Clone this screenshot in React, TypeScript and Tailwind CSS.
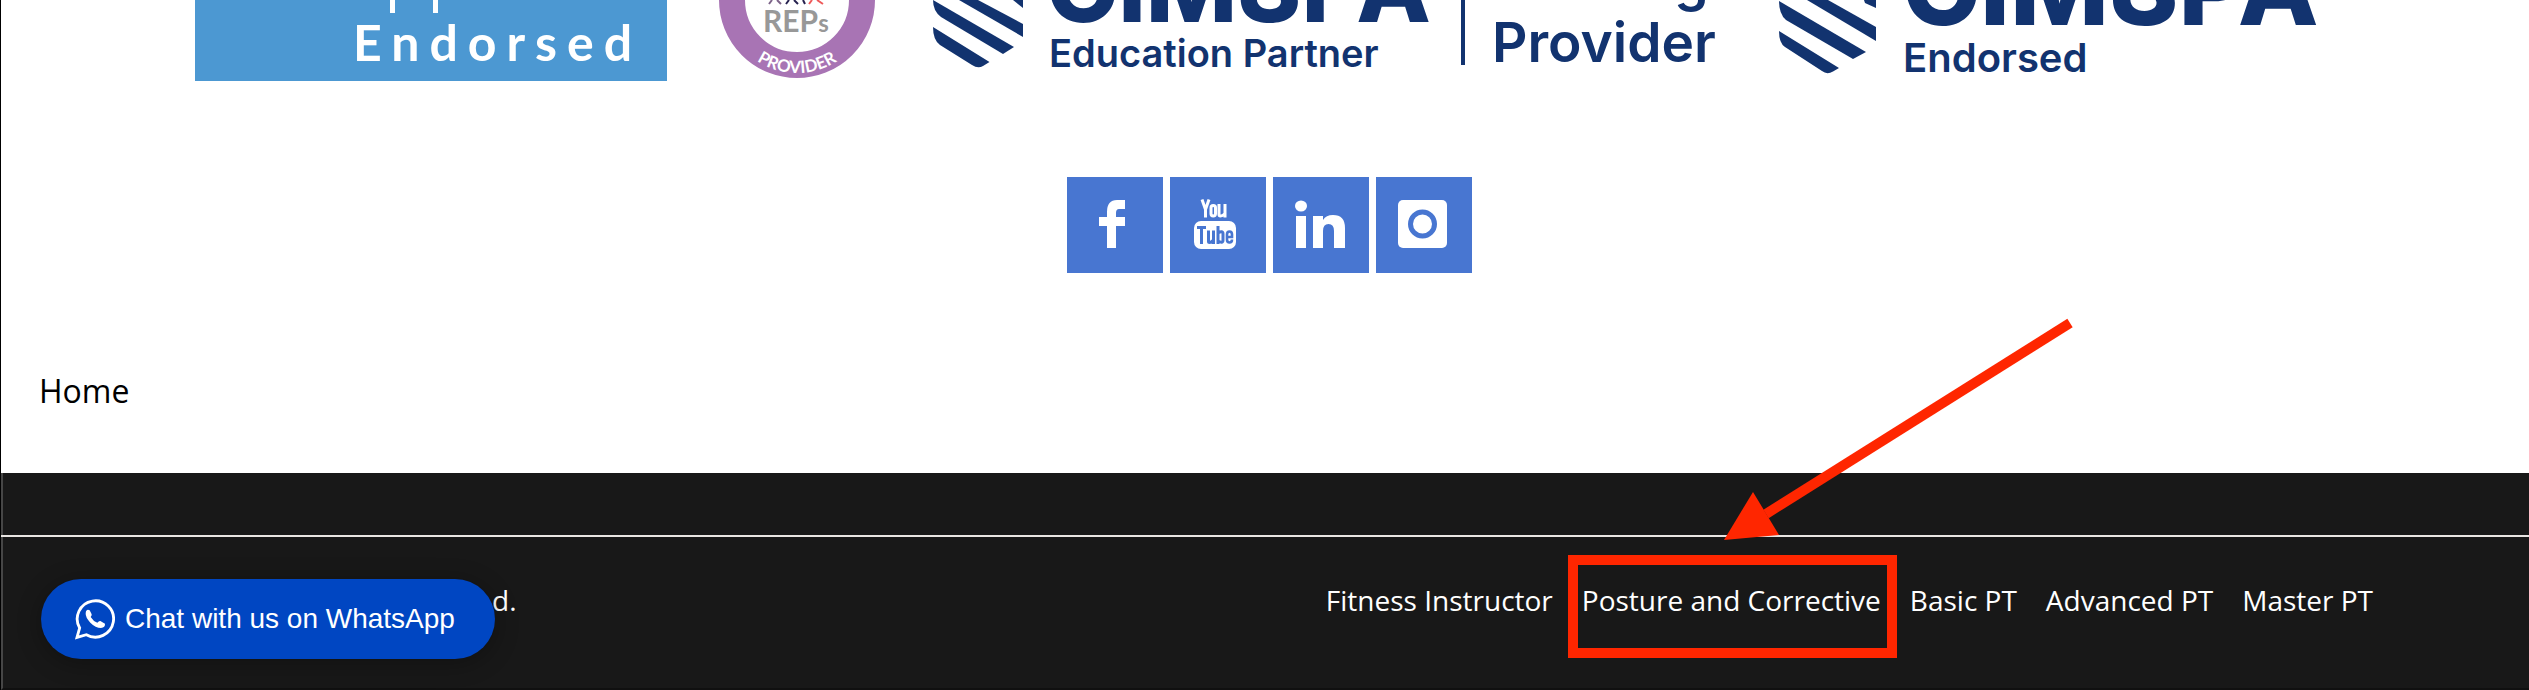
import React from "react";

const NAVY = "#12336f";

const courses = ["Fitness Instructor", "Posture and Corrective", "Basic PT", "Advanced PT", "Master PT"];

const EndorsedLogo: React.FC = () => (
  <svg width="472" height="81" viewBox="0 0 472 81" role="img" aria-label="Endorsed" className="shrink-0 bg-[#4c98d2]">
    <path d="M195 0h5v13h-5zM238 0h5v13h-5z" fill="#fff" />
    <text x="158" y="61" fill="#fff" fontSize="50" className="font-['Lato'] font-bold tracking-[0.2em]">
      Endorsed
    </text>
  </svg>
);

const RepsLogo: React.FC = () => (
  <svg width="157" height="81" viewBox="0 0 157 81" role="img" aria-label="REPs Provider" className="shrink-0">
    <circle cx="78" cy="0" r="65" fill="#fff" stroke="#a874b4" strokeWidth="26" />
    <path d="M53 0l-3 4M58 0l4 4" stroke="#7d6489" strokeWidth="2" />
    <path d="M70 0l-3 4M75 0l4 4M84 0l2 4" stroke="#26224f" strokeWidth="2" />
    <path d="M93 0l-3 4M98 0l6 4" stroke="#ee5a5a" strokeWidth="2" />
    <text x="44" y="32" fill="#989898" fontSize="30" className="font-['Lato'] font-bold">
      REP
      <tspan fontSize="24">s</tspan>
    </text>
    <path id="reps-arc" d="M5 0A73 73 0 0 0 151 0" fill="none" />
    <text fill="#fff" fontSize="17" textAnchor="middle" className="font-['Lato'] font-bold">
      <textPath href="#reps-arc" startOffset="50%">
        PROVIDER
      </textPath>
    </text>
  </svg>
);

const CimspaPartnerLogo: React.FC = () => (
  <svg width="794" height="81" viewBox="0 0 794 81" role="img" aria-label="CIMSPA Education Partner" className="shrink-0">
    <g fill={NAVY} className="font-['Inter']">
      <path d="M5 27L61.500 62L55 66Q50 69 44 65L12 45Q5 40 5 27Z" />
      <path d="M5 0L86 47L75 54L13 17Q5 11 5 0Z" />
      <path d="M31 0H50L95 24V37Z" />
      <path d="M85 0H95V8Z" />
      <text x="118" y="22" fontSize="97" className="font-extrabold">
        CIMSPA
      </text>
      <text x="121" y="67" fontSize="38" className="font-semibold">
        Education Partner
      </text>
      <path d="M533 0h4v65h-4z" />
      <text x="564" y="0" fontSize="55" className="font-semibold">
        Training
      </text>
      <text x="564" y="62" fontSize="55" className="font-semibold">
        Provider
      </text>
    </g>
  </svg>
);

const CimspaEndorsedLogo: React.FC = () => (
  <svg width="550" height="81" viewBox="0 0 550 81" role="img" aria-label="CIMSPA Endorsed" className="shrink-0">
    <g fill={NAVY} className="font-['Inter']">
      <path d="M5 31L65 68L59 71.500Q53 75 48 71L11 47Q5 43 5 31Z" />
      <path d="M5 1L92 52L79 59L12 20Q5 14 5 1Z" />
      <path d="M33 0H54L102 27V41Z" />
      <path d="M90 0H102V8L91 3Z" />
      <text x="128" y="25" fontSize="105" className="font-extrabold">
        CIMSPA
      </text>
      <text x="129" y="72" fontSize="40" className="font-semibold">
        Endorsed
      </text>
    </g>
  </svg>
);

const socials = [
  {
    name: "Facebook",
    icon: <path d="M58 23v9h-6q-3 0-3 4v4h9v9h-9v22h-9V49h-8v-9h8v-5q0-12 10-12z" fill="#fff" />,
  },
  {
    name: "YouTube",
    icon: (
      <>
        <g fill="none" stroke="#fff" strokeWidth="3">
          <path d="M32 22.500l3.500 10v8M39 22.500l-3.500 10" />
          <rect x="41" y="28.500" width="4.500" height="10.500" rx="2.200" />
          <path d="M49 27v10.500q0 1.500 1.500 1.500q2 0 4-2M55 27v13.500" />
        </g>
        <rect x="24" y="44" width="42" height="28" rx="7" fill="#fff" />
        <g fill="none" stroke="#4876d1" strokeWidth="3">
          <path d="M27 50.500h9M31.500 50v17" />
          <path d="M38.500 53.500v11q0 1 1 1q2 0 3.500-2M43.500 53.500V67" />
          <path d="M48 49v18M48 56q5-3 5 1v6q0 4-5 1" />
          <path d="M62 62.500q0 3-2.500 3t-2.500-3v-5q0-3 2.500-3t2.500 3v2.500h-5" strokeWidth="2.600" />
        </g>
      </>
    ),
  },
  {
    name: "LinkedIn",
    icon: (
      <g fill="#fff">
        <ellipse cx="28" cy="29" rx="6" ry="5.500" />
        <path d="M23 39h10v32H23zM40 39h10v4q3-5 10-5q12 0 12 13v20H61V54q0-7-5.500-7T50 54v17H40z" />
      </g>
    ),
  },
  {
    name: "Instagram",
    icon: (
      <>
        <rect x="22" y="23" width="49" height="48" rx="5" fill="#fff" />
        <circle cx="46.500" cy="47" r="12" fill="none" stroke="#4876d1" strokeWidth="5" />
      </>
    ),
  },
];

const WhatsAppIcon: React.FC = () => (
  <svg width="40" height="41" viewBox="0 0 120 123" aria-hidden="true" className="shrink-0">
    <path
      d="M6 115L14 87A54.500 54.500 0 1 1 34 107Z"
      fill="none"
      stroke="#fff"
      strokeWidth="8.500"
    />
    <path
      d="M36 33q4-2 8 1l6 12q1 3-3 8q8 13 20 17q5-6 9-5l14 8q1 11-12 13q-16 0-32-16Q31 55 32 43q0-7 4-10z"
      fill="#fff"
    />
  </svg>
);

// Arrow and frame that point out one of the footer links
const Callout: React.FC = () => (
  <>
    <svg
      width="350"
      height="222"
      viewBox="0 0 350 222"
      aria-hidden="true"
      className="pointer-events-none absolute bottom-full left-[142px] mb-10"
    >
      <path d="M346 5L42 196" stroke="#ff2600" strokeWidth="10" />
      <path d="M0 222L29 174L55 217Z" fill="#ff2600" />
    </svg>
    <span className="pointer-events-none absolute -top-[25px] -right-4 -bottom-[38px] -left-[14px] border-10 border-[#ff2600]" />
  </>
);

const App: React.FC = () => {
  return (
    <div className="relative overflow-hidden border-l border-black bg-white font-['Open_Sans',sans-serif] text-black">
      <section className="flex gap-[52px] pl-[194px]">
        <EndorsedLogo />
        <RepsLogo />
        <CimspaPartnerLogo />
        <CimspaEndorsedLogo />
      </section>

      <nav aria-label="Social media" className="mt-24 flex justify-center gap-[7px] pl-2">
        {socials.map((s) => (
          <a key={s.name} href="#" aria-label={s.name} className="size-24 bg-[#4876d1]">
            <svg viewBox="0 0 96 96" aria-hidden="true">
              {s.icon}
            </svg>
          </a>
        ))}
      </nav>

      <div className="px-[38px] pt-24 pb-[60px] text-[32px] leading-[44px]">
        <a href="#">Home</a>
      </div>

      <footer className="border-b-2 border-l-2 border-b-[#101010] border-l-[#464646] bg-[#181818] pt-[62px] text-[28px] leading-10 text-white">
        <hr className="-ml-0.5 border-t-2 border-[#e8e5e2]" />
        <div className="flex items-center justify-between pt-[43px] pr-[156px] pb-[68px] pl-[489px]">
          <p>d.</p>
          <ul className="flex gap-[29px]">
            {courses.map((course) => (
              <li key={course} className="relative whitespace-nowrap">
                <a href="#">{course}</a>
                {course === "Posture and Corrective" && <Callout />}
              </li>
            ))}
          </ul>
        </div>
      </footer>

      <button
        type="button"
        className="absolute bottom-[31px] left-10 flex h-20 items-center gap-2.5 rounded-full bg-[#0046c2] px-[34px] pr-10 font-['Liberation_Sans',sans-serif] text-[28px] whitespace-nowrap text-white shadow-[0_4px_24px_rgba(0,0,0,0.3)]"
      >
        <WhatsAppIcon />
        Chat with us on WhatsApp
      </button>
    </div>
  );
};

export default App;
